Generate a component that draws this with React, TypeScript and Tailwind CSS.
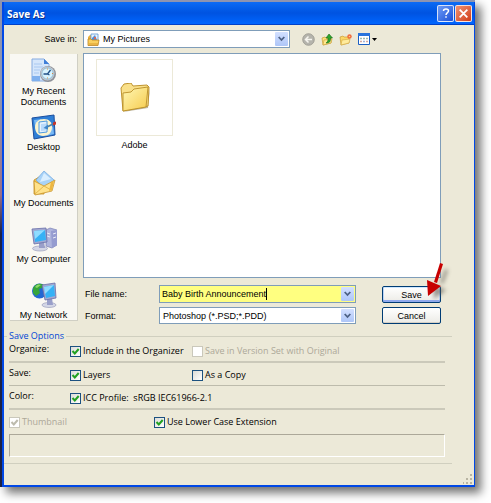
import React from 'react';

interface PlaceProps {
  label: string;
  children: React.ReactNode;
}

interface CheckProps {
  id: string;
  label: string;
  checked?: boolean;
  disabled?: boolean;
}

const RecentIcon: React.FC = () => (
  <svg viewBox="0 0 26 26" className="w-[26px] h-[26px]">
    <path d="M1 1h12l5 5v17H1z" fill="#d5e6fb" stroke="#86abe0" />
    <path d="M13 1v5h5z" fill="#3f7ed8" />
    <path d="M3 6h8M3 9h9M3 12h6M3 15h5" stroke="#a9c8f0" />
    <path d="M1 18h8v5H1z" fill="#7fb0ee" />
    <circle cx="17" cy="16" r="8" fill="#8f9299" />
    <circle cx="16.500" cy="15.500" r="7" fill="#c6cbd3" />
    <circle cx="16.500" cy="15.500" r="5.600" fill="#d9f3fd" stroke="#6ba6c8" strokeWidth=".6" />
    <path d="M19.500 12l-3 4h-4M16.500 16l2 1" stroke="#1f4f86" strokeWidth="1.300" fill="none" />
    <path d="M16.500 10.500v1M16.500 19.500v1M21 15.500h1" stroke="#e08a3c" />
  </svg>
);

const DesktopIcon: React.FC = () => (
  <svg viewBox="0 0 26 26" className="w-[26px] h-[26px]">
    <path d="M1 4L23 1l1 20-21 4z" fill="#2f7fd6" stroke="#1c4f9e" />
    <path d="M3 6l8-1-7 8zM22 12l1 8-8 2z" fill="#79b8f4" />
    <path d="M4 13c0-5 4-8 9-8s8 3 8 8-3 9-9 9c-5 0-8-4-8-9z" fill="#fbf4cf" />
    <path d="M8 8l8-1v11l-8 1z" fill="#e4f1fd" stroke="#4d9ae0" />
    <path d="M10 10l5-.5v7l-5 .5z" fill="#b8dafb" />
    <path d="M22 10l-6 3" stroke="#4a7ea8" strokeWidth="1.800" />
    <path d="M17 10.500v5L12.500 14z" fill="#3f86c9" />
    <path d="M22 8.500l3-1v3l-3 1z" fill="#c4372c" />
  </svg>
);

const DocumentsIcon: React.FC = () => (
  <svg viewBox="0 0 26 26" className="w-[26px] h-[26px]">
    <path d="M3 10l5-3 5 2v15H3z" fill="#f4c54d" stroke="#c78f22" strokeWidth=".8" />
    <path d="M13 1l10 9-8 10-10-10z" fill="#a8d3f8" stroke="#79ace0" strokeWidth=".8" />
    <path d="M13 3l7 6-11 3z" fill="#d9eeff" />
    <path d="M3 11l10 5 11-6-3 11-17 4z" fill="#ffe28a" stroke="#c9962e" strokeWidth=".8" />
    <path d="M4 24l9-8 7 4" fill="none" stroke="#e5b84b" />
    <path d="M20 12l3-1-2 9-3 1z" fill="#edb640" />
  </svg>
);

const ComputerIcon: React.FC = () => (
  <svg viewBox="0 0 26 26" className="w-[26px] h-[26px]">
    <path d="M15 4l4-2 7 2v15l-5 3-6-2z" fill="#aeb4dc" stroke="#7a80b4" strokeWidth=".7" />
    <path d="M20 5l6-1v15l-5 3z" fill="#959cd0" />
    <path d="M16 7l3 1M16 10l3 1M22 8l3-1M22 12l3-1" stroke="#e9ebf8" />
    <ellipse cx="9" cy="22.500" rx="7.500" ry="2.500" fill="#d3d6e6" stroke="#8f94b4" strokeWidth=".6" />
    <path d="M8 16l5-1 1 7H8z" fill="#999fc9" />
    <path d="M1 3l14-1 1 14-13 2z" fill="#a3a9d1" stroke="#686fa8" strokeWidth=".8" />
    <path d="M3 5l11-1 1 10-11 2z" fill="#35b1f5" />
    <path d="M3 5l11-1-10 9z" fill="#8fdcff" />
  </svg>
);

const NetworkIcon: React.FC = () => (
  <svg viewBox="0 0 26 26" className="w-[26px] h-[26px]">
    <circle cx="8.500" cy="9" r="7.500" fill="#2267d3" />
    <path d="M2 6c3-5 7-5 11-3l-2 3-3 1 1 4-4 3-3-3z" fill="#36a53a" />
    <path d="M4 5c2-3 4-3 6-2L6 6z" fill="#8ed866" />
    <ellipse cx="18" cy="23" rx="7" ry="2.500" fill="#d3d6e6" stroke="#8f94b4" strokeWidth=".6" />
    <path d="M16 16l5 0 1 7h-6z" fill="#999fc9" />
    <path d="M11 3l13-2 1 15-11 2z" fill="#a3a9d1" stroke="#686fa8" strokeWidth=".8" />
    <path d="M13 5l10-2 1 11-9 2z" fill="#35b1f5" />
    <path d="M13 5l10-2-9 9z" fill="#8fdcff" />
  </svg>
);

const FolderIcon: React.FC = () => (
  <svg viewBox="0 0 30 30" className="w-[30px] h-[30px]">
    <defs>
      <linearGradient id="folder" x1="0" y1="0" x2="1" y2="1">
        <stop offset="0" stopColor="#fff7b5" />
        <stop offset="1" stopColor="#f6cb4c" />
      </linearGradient>
    </defs>
    <path d="M3 29L28 25l2-20-3 16z" fill="#7a6a3a" opacity=".5" />
    <path d="M1 5l3-4 7-1 2 3 14-1 2 2-1 19L3 28z" fill="#f9e08a" stroke="#b8891e" strokeWidth=".9" />
    <path d="M3 10l8-1 3-3 14-2-2 20L3 28z" fill="url(#folder)" stroke="#b98e28" strokeWidth=".9" />
  </svg>
);

const ArrowGlyph: React.FC = () => (
  <span className="w-[13px] h-full rounded-[1px] bg-linear-to-b from-[#d3e0ff] to-[#aec6f8] flex items-center justify-center">
    <svg viewBox="0 0 7 6" className="w-[7px] h-[6px]">
      <path d="M.7 1l2.800 3L6.300 1" fill="none" stroke="#4d6185" strokeWidth="1.800" />
    </svg>
  </span>
);

const Place: React.FC<PlaceProps> = ({ label, children }) => (
  <li className="h-14">
    <button className="w-full flex flex-col items-center gap-0.5 leading-[11px]">
      {children}
      <span>{label}</span>
    </button>
  </li>
);

const Check: React.FC<CheckProps> = ({ id, label, checked = false, disabled = false }) => (
  <div className="flex items-center gap-[2px] h-3 mt-0.5 whitespace-pre">
    <span className="grid w-[11px] h-[11px]">
      <input
        id={id}
        type="checkbox"
        defaultChecked={checked}
        disabled={disabled}
        className="peer [grid-area:1/1] appearance-none w-[11px] h-[11px] border border-[#1c5180] bg-linear-to-br from-[#dcdcd7] to-white disabled:border-[#cac8bb] disabled:from-white"
      />
      <svg
        viewBox="0 0 11 11"
        className="[grid-area:1/1] w-[11px] h-[11px] pointer-events-none invisible peer-checked:visible text-[#21a121] peer-disabled:text-[#bdbbad]"
      >
        <path d="M2.500 5l2.300 2.500L8.700 3" fill="none" stroke="currentColor" strokeWidth="2" />
      </svg>
    </span>
    <label htmlFor={id} className={disabled ? 'text-[#aca899]' : ''}>{label}</label>
  </div>
);

const TitleBar: React.FC = () => (
  <header className="h-[23px] flex items-center gap-px pl-[3px] pr-0.5 bg-linear-to-b from-[#0d6bf5] via-[#0053e1] to-[#0066ff] border-b border-[#0040c8] text-white">
    <h1 className="flex-1 pt-0.5 font-[Open_Sans,sans-serif] font-bold text-[10px] [text-shadow:1px_1px_#0a2f8a]">Save As</h1>
    <button aria-label="Help" className="w-[17px] h-[17px] border border-white/80 rounded-[2px] bg-linear-to-br from-[#6f9bf5] to-[#1c4fd6] flex items-center justify-center">
      <svg viewBox="0 0 12 12" className="w-3 h-3">
        <path d="M3.500 4C3.500 1.200 8.500 1.200 8.500 4 8.500 5.700 6 5.600 6 8M6 9.200v1.600" fill="none" stroke="white" strokeWidth="1.500" />
      </svg>
    </button>
    <button aria-label="Close" className="w-[17px] h-[17px] border border-white/80 rounded-[2px] bg-linear-to-br from-[#f0906f] to-[#d03a10] flex items-center justify-center">
      <svg viewBox="0 0 10 10" className="w-[11px] h-[11px]">
        <path d="M1.500 1.500l7 7M8.500 1.500l-7 7" stroke="white" strokeWidth="1.600" />
      </svg>
    </button>
  </header>
);

const Toolbar: React.FC = () => (
  <div className="flex items-center">
    <label htmlFor="save-in" className="w-[73px] pr-1.5 text-right">Save in:</label>
    <div className="flex-1 h-[18px] flex items-center border border-[#7f9db9] bg-white pl-[3px] pr-px py-px">
      <svg viewBox="0 0 13 13" className="w-[13px] h-[13px]">
        <path d="M1 4l2-2h2l1 2v8H1z" fill="#e9b03c" />
        <path d="M4 1h7v7H4z" fill="#e8f3fd" stroke="#5a96d2" strokeWidth=".8" />
        <path d="M5 5l3-3 2 5H5z" fill="#4a8fe0" />
        <path d="M7 4h2v2H7z" fill="#d8695a" />
        <path d="M1 6h3l1 1h7l-1 5.500H1z" fill="#f9cf5e" stroke="#bd8420" strokeWidth=".8" />
        <path d="M2 11h9" stroke="#d99a2c" />
      </svg>
      <select id="save-in" className="flex-1 min-w-0 appearance-none bg-transparent pl-[3px] outline-none">
        <option>My Pictures</option>
      </select>
      <ArrowGlyph />
    </div>
    <div className="w-[151px] pl-3 flex items-center gap-1.5">
      <button aria-label="Back" disabled>
        <svg viewBox="0 0 13 13" className="w-[13px] h-[13px]">
          <circle cx="6.500" cy="6.500" r="5.800" fill="#b5b4ac" stroke="#95948c" strokeWidth=".8" />
          <path d="M10 6.500H4M6.500 3.500l-3 3 3 3" fill="none" stroke="#f6f5ef" strokeWidth="1.500" />
        </svg>
      </button>
      <button aria-label="Up one level">
        <svg viewBox="0 0 12 13" className="w-3 h-[13px]">
          <path d="M1 5l3-1 1 1h5v5l-8 2z" fill="#fbe07c" stroke="#c99c35" strokeWidth=".7" />
          <path d="M2 12l1-5 8-1-1 4z" fill="#ffe990" stroke="#c99c35" strokeWidth=".6" />
          <path d="M5 10c2-1 2-3 2-5H5l3-4 3.500 4h-2c0 4-1 5-4.500 5z" fill="#2ea52b" stroke="#176b1a" strokeWidth=".6" />
        </svg>
      </button>
      <button aria-label="New folder">
        <svg viewBox="0 0 13 13" className="w-[13px] h-[13px]">
          <path d="M1 4l3-1 1 1h5v6l-8 2z" fill="#fbd765" stroke="#c99c35" strokeWidth=".7" />
          <path d="M2 12l1-5 8-1-1 4z" fill="#ffeb9c" stroke="#d1a642" strokeWidth=".6" />
          <circle cx="10.500" cy="3.500" r="2.200" fill="#f0693c" />
          <circle cx="10.500" cy="3.500" r=".8" fill="#ffd27d" />
        </svg>
      </button>
      <button aria-label="View menu" className="flex items-center gap-0.5">
        <svg viewBox="0 0 12 12" className="w-3 h-3">
          <path d="M.5.500h11v11H.500z" fill="white" stroke="#1a5fc4" />
          <path d="M0 0h12v3H0z" fill="#2874dc" />
          <path d="M2.500 5.500h1M5.500 5.500h1M8.500 5.500h1" stroke="#3d7a62" strokeWidth="1.500" />
          <path d="M2.500 8.500h1M8.500 8.500h1" stroke="#b0503f" strokeWidth="1.500" />
          <path d="M5.500 8.500h1" stroke="#3c64b8" strokeWidth="1.500" />
        </svg>
        <svg viewBox="0 0 5 3" className="w-[5px] h-[3px]">
          <path d="M0 0h5L2.500 3z" fill="black" />
        </svg>
      </button>
    </div>
  </div>
);

const FileFields: React.FC = () => (
  <div className="mt-[7px] flex gap-[26px]">
    <div className="flex-1 flex flex-col gap-1">
      <div className="flex items-center">
        <label htmlFor="file-name" className="w-[76px] pl-0.5">File name:</label>
        <div className="flex-1 h-[18px] flex items-center border border-[#7f9db9] bg-[#ffff80] pl-0.5 pr-px py-px">
          <input id="file-name" defaultValue="Baby Birth Announcement" className="[field-sizing:content] outline-none" />
          <span className="w-px h-3 bg-black"></span>
          <button aria-label="Recent names" className="ml-auto h-full"><ArrowGlyph /></button>
        </div>
      </div>
      <div className="flex items-center">
        <label htmlFor="format" className="w-[76px] pl-0.5">Format:</label>
        <div className="flex-1 h-[17px] flex items-center border border-[#7f9db9] bg-white pl-[3px] pr-px py-px">
          <select id="format" className="flex-1 min-w-0 appearance-none bg-transparent outline-none">
            <option>Photoshop (*.PSD;*.PDD)</option>
          </select>
          <ArrowGlyph />
        </div>
      </div>
    </div>
    <div className="w-[59px] flex flex-col gap-1 pt-px">
      <div className="relative">
        <button className="w-full h-[17px] flex items-center justify-center border border-[#003c74] rounded-[2px] bg-linear-to-b from-white to-[#ecebe6] shadow-[inset_0_1px_#cee7ff,inset_0_-2px_#8fa9ee,inset_1px_0_#bcd4f6,inset_-1px_0_#bcd4f6]">
          Save
        </button>
        <svg viewBox="0 0 30 42" className="absolute -right-3 bottom-0 w-[30px] h-[42px] pointer-events-none">
          <g className="blur-[2px]" fill="#55524a" opacity=".6">
            <path d="M22 8l3 1-5 14-3-1z" />
            <path d="M10 24l1 14 12-9z" />
          </g>
          <path d="M17 2l3 1-6 19-3-1z" fill="#c80000" />
          <path d="M4 19l1 16 13-10z" fill="#c80000" />
        </svg>
      </div>
      <button className="w-full h-[17px] flex items-center justify-center border border-[#003c74] rounded-[2px] bg-linear-to-b from-white to-[#ecebe6] shadow-[inset_0_-1px_#d6d0c5]">
        Cancel
      </button>
    </div>
  </div>
);

const SaveOptions: React.FC = () => (
  <fieldset className="mt-1.5 mr-[22px] min-w-0 border-t border-[#d0cfbf] font-[Open_Sans,sans-serif] text-[9px] leading-3">
    <legend className="ml-[3px] px-0.5 text-[#0046d5]">Save Options</legend>
    <div className="-mt-[3px] ml-[5px] mr-[7px]">
      <div className="h-6 pt-1 grid grid-cols-[61px_122px_1fr] border-b-2 border-[#cbc9ba]">
        <span>Organize:</span>
        <Check id="organizer" label="Include in the Organizer" checked />
        <Check id="version-set" label="Save in Version Set with Original" disabled />
      </div>
      <div className="h-[23px] pt-1 grid grid-cols-[61px_122px_1fr] border-b border-[#bdbbac]">
        <span>Save:</span>
        <Check id="layers" label="Layers" checked />
        <Check id="copy" label="As a Copy" />
      </div>
      <div className="h-6 pt-1 grid grid-cols-[61px_1fr] border-b-2 border-[#cbc9ba]">
        <span>Color:</span>
        <Check id="icc" label="ICC Profile:  sRGB IEC61966-2.1" checked />
      </div>
      <div className="h-6 pt-1 grid grid-cols-[145px_1fr]">
        <Check id="thumbnail" label="Thumbnail" checked disabled />
        <Check id="lower-case" label="Use Lower Case Extension" checked />
      </div>
      <div className="h-[23px] border border-t-[#aca899] border-l-[#aca899] border-r-white border-b-white"></div>
    </div>
  </fieldset>
);

const App: React.FC = () => {
  return (
    <div className="bg-white pr-4 pb-4 overflow-hidden font-[Liberation_Sans,sans-serif] text-[9px] leading-3 text-black">
      <div className="pl-0.5 pt-0.5 bg-linear-to-b from-[#8e94b0] from-20% via-[#9a6f86] via-40% to-[#1b2145] to-48% shadow-[6px_6px_9px_rgba(0,0,0,0.55)]">
        <main className="border-l-2 border-r border-b-2 border-[#0048e6] bg-[#ece9d8]">
          <TitleBar />
          <div className="pl-1.5 pr-[33px] pt-[5px]">
            <Toolbar />
            <div className="mt-[5px] flex gap-[5px]">
              <ul className="w-[68px] h-[267px] mt-px pt-1 overflow-hidden bg-[#f9f8f3] border-r border-b border-[#d0cfc4]">
                <Place label="My Recent Documents"><RecentIcon /></Place>
                <Place label="Desktop"><DesktopIcon /></Place>
                <Place label="My Documents"><DocumentsIcon /></Place>
                <Place label="My Computer"><ComputerIcon /></Place>
                <Place label="My Network"><NetworkIcon /></Place>
              </ul>
              <section className="flex-1">
                <div className="h-[225px] border border-[#7f9db9] bg-white pl-3 pt-[5px]">
                  <figure className="w-[77px] text-center">
                    <div className="h-[77px] border border-[#ece9d8] flex items-center justify-center">
                      <FolderIcon />
                    </div>
                    <figcaption className="mt-[3px]">Adobe</figcaption>
                  </figure>
                </div>
                <FileFields />
              </section>
            </div>
          </div>
          <SaveOptions />
          <div className="mt-1.5 mr-[22px] border-t border-[#d0cfbf]"></div>
          <div className="h-[21px] flex items-end justify-end p-px">
            <svg viewBox="0 0 10 10" className="w-[10px] h-[10px]">
              <path d="M7 0h2v2H7zM7 4h2v2H7zM3 4h2v2H3zM7 8h2v2H7zM3 8h2v2H3zM0 8h1v2H0z" fill="#b8b4a2" />
            </svg>
          </div>
        </main>
      </div>
    </div>
  );
};

export default App;
